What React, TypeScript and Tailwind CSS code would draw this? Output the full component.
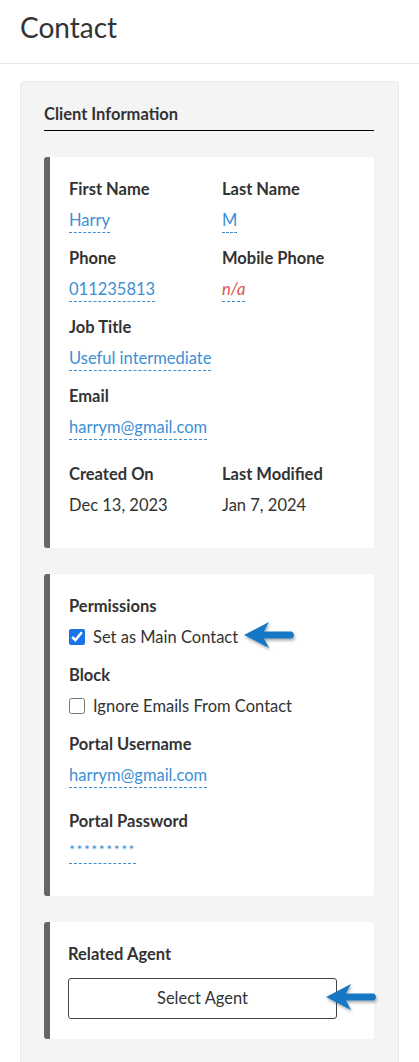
import React from 'react'

const font = { fontFamily: 'Lato, "Noto Sans", sans-serif' }

function Arrow({ className }: { className?: string }) {
  return (
    <svg className={className} width="56" height="32" viewBox="0 0 56 32">
      <defs>
        <filter id="sh" x="-20%" y="-30%" width="140%" height="170%">
          <feDropShadow dx="1" dy="2" stdDeviation="1.4" floodColor="#000" floodOpacity="0.35" />
        </filter>
      </defs>
      <path
        d="M2 15 L27 2 L22 11.5 L50 11.5 Q54 15 50 18.5 L22 18.5 L27 28 Z"
        fill="#1677c4"
        filter="url(#sh)"
        strokeLinejoin="round"
      />
    </svg>
  )
}

function Field({ label, value, na, plain }: { label: string; value: string; na?: boolean; plain?: boolean }) {
  return (
    <div>
      <div className="text-[16.5px] font-bold leading-6 text-[#333]">{label}</div>
      <div className="mt-[7px]">
        {plain ? (
          <span className="text-[16.5px] leading-6 text-[#333]">{value}</span>
        ) : (
          <span
            className={`inline-block border-b border-dashed border-[#3d8fd4] text-[16.5px] leading-[23px] ${
              na ? 'italic text-[#d9534f]' : 'text-[#3d8fd4]'
            }`}
          >
            {value}
          </span>
        )}
      </div>
    </div>
  )
}

function Card({ children, pb }: { children: React.ReactNode; pb: string }) {
  return (
    <div className={`rounded-[3px] border-l-[6px] border-[#666] bg-white pl-[19px] pr-5 pt-5 ${pb}`}>{children}</div>
  )
}

export default function App() {
  return (
    <div className="min-h-[1062px] bg-white" style={font}>
      <div className="h-[64px] border-b border-[#e6e6e6] px-5 pt-[9px]">
        <h1 className="text-[28px] leading-9 text-[#333]">Contact</h1>
      </div>
      <div className="px-5 pt-[17px]">
        <div className="min-h-[990px] rounded-t-[4px] border border-[#e9e9e9] bg-[#f4f4f4] pl-[23px] pr-6 pt-[20px]">
          <h2 className="border-b border-black pb-[4px] text-[16.5px] font-bold leading-6 text-[#333]">
            Client Information
          </h2>

          <div className="mt-[26px] flex flex-col gap-[26px]">
            <Card pb="pb-[31px]">
              <div className="grid grid-cols-[153px_1fr] gap-y-[13px]">
                <Field label="First Name" value="Harry" />
                <Field label="Last Name" value="M" />
                <Field label="Phone" value="011235813" />
                <Field label="Mobile Phone" value="n/a" na />
                <div className="col-span-2">
                  <Field label="Job Title" value="Useful intermediate" />
                </div>
                <div className="col-span-2">
                  <Field label="Email" value="harrym@gmail.com" />
                </div>
                <div className="mt-[9px]">
                  <Field label="Created On" value="Dec 13, 2023" plain />
                </div>
                <div className="mt-[9px]">
                  <Field label="Last Modified" value="Jan 7, 2024" plain />
                </div>
              </div>
            </Card>

            <Card pb="pb-[32px]">
              <div className="text-[16.5px] font-bold leading-6 text-[#333]">Permissions</div>
              <label className="relative mt-[7px] flex h-6 items-center gap-2 text-[16.5px] text-[#333]">
                <input type="checkbox" defaultChecked className="m-0 h-4 w-4 accent-[#1a73e8]" />
                <span className="relative">
                  Set as Main Contact
                  <Arrow className="absolute left-[calc(100%+4px)] top-[-5px]" />
                </span>
              </label>
              <div className="mt-[14px] text-[16.5px] font-bold leading-6 text-[#333]">Block</div>
              <label className="mt-[7px] flex h-6 items-center gap-2 text-[16.5px] text-[#333]">
                <input type="checkbox" className="m-0 h-4 w-4" />
                <span>Ignore Emails From Contact</span>
              </label>
              <div className="mt-[14px]">
                <Field label="Portal Username" value="harrym@gmail.com" />
              </div>
              <div className="mt-[21px]">
                <div className="text-[16.5px] font-bold leading-6 text-[#333]">Portal Password</div>
                <div className="mt-[4px]">
                  <span className="inline-block border-b border-dashed border-[#3d8fd4] pb-[3px] text-[14px] leading-5 tracking-[1.5px] text-[#3d8fd4]">
                    *********
                  </span>
                </div>
              </div>
            </Card>

            <div className="rounded-[3px] border-l-[6px] border-[#666] bg-white pb-5 pl-[18px] pr-[37px] pt-5">
              <div className="text-[16.5px] font-bold leading-6 text-[#333]">Related Agent</div>
              <div className="relative mt-[12px]">
                <button className="h-[41px] w-full rounded-[3px] border border-[#444] bg-white text-[16.5px] text-[#333]">
                  Select Agent
                </button>
                <Arrow className="absolute left-[calc(100%-13px)] top-[4px]" />
              </div>
            </div>
          </div>
        </div>
      </div>
    </div>
  )
}
